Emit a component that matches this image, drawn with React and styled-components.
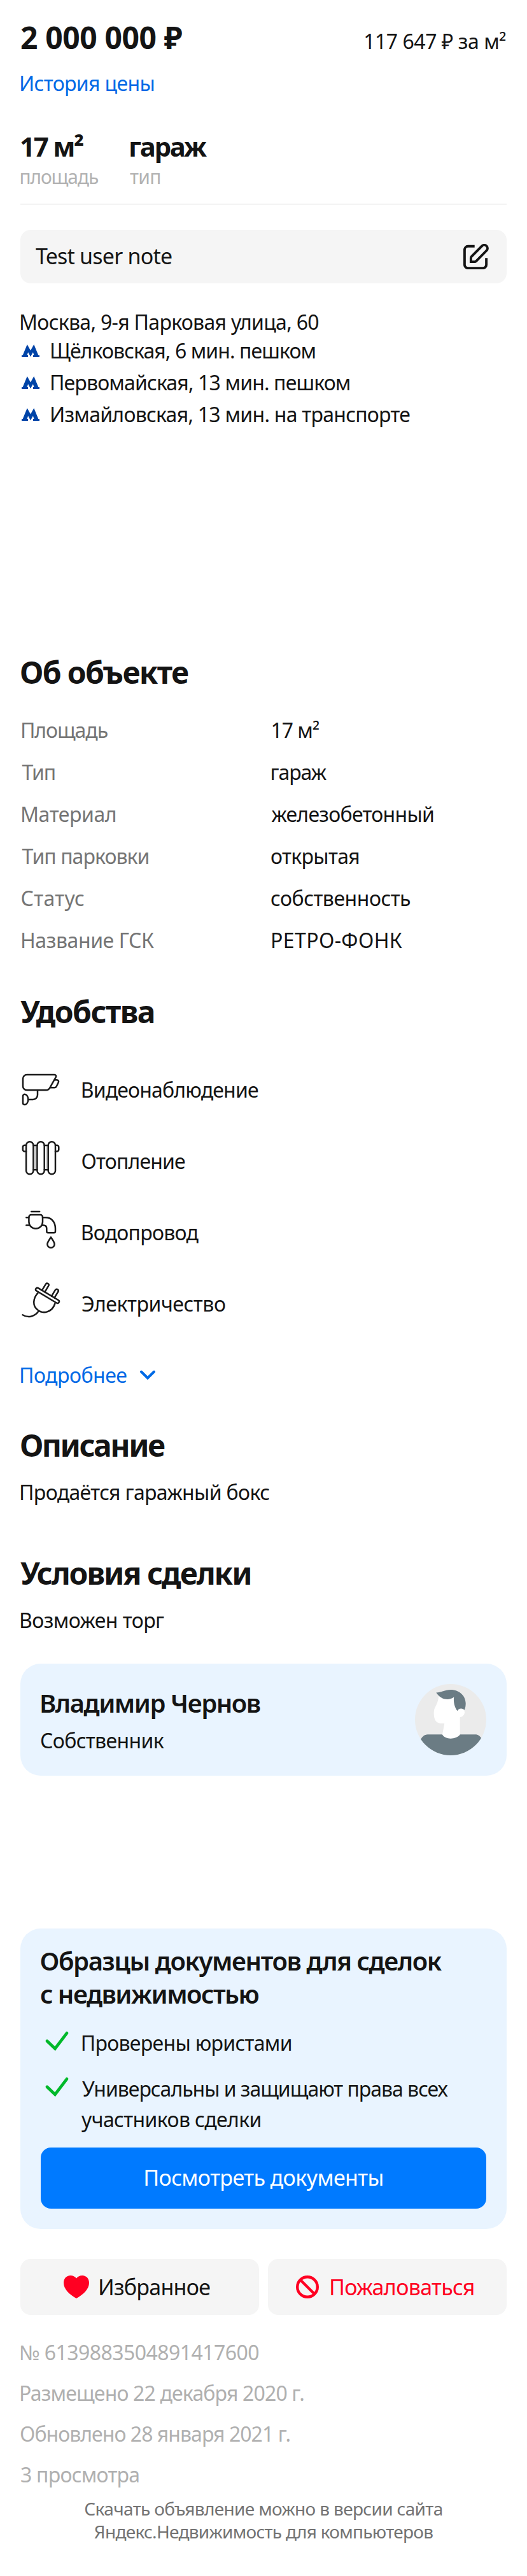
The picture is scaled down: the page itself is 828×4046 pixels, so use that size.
import React from 'react';
import styled, { createGlobalStyle } from 'styled-components';

const GlobalStyle = createGlobalStyle`
  * { box-sizing: border-box; }
  body {
    margin: 0;
    background: #fff;
    color: #141414;
    font-family: "Noto Sans", "Open Sans", sans-serif;
    font-size: 32px;
  }
  h2, h3, p, ul, dl, dd, dt { margin: 0; padding: 0; font-weight: inherit; }
  button { border: 0; font-family: inherit; color: inherit; background: none; padding: 0; }
`;

const Run = styled.span`
  display: inline-block;
  white-space: nowrap;
  letter-spacing: ${(p) => p.$track || 0}px;
  margin-left: ${(p) => p.$nudge || 0}px;
`;

const Page = styled.main`
  width: 828px;
  height: 4046px;
  padding: 30px 32px 0;
  overflow: hidden;
`;

const PriceRow = styled.div`
  display: flex;
  justify-content: space-between;
  align-items: baseline;
  height: 56px;
`;
const Price = styled.div`
  font-size: 48px;
  font-weight: 700;
  line-height: 58px;
`;
const PricePerMeter = styled.div`
  line-height: 48px;
  padding-right: 1px;
`;
const PriceHistory = styled.div`
  margin-top: 21px;
  line-height: 48px;
  color: #006ae6;
`;

const Stats = styled.div`
  display: flex;
  margin-top: 49px;
  height: 117px;
  border-bottom: 1px solid #d6d6d6;
`;
const Stat = styled.div`
  width: 172px;
`;
const StatValue = styled.div`
  font-size: 42px;
  font-weight: 700;
  line-height: 52px;
`;
const StatLabel = styled.div`
  margin-top: 2px;
  font-size: 30px;
  line-height: 40px;
  color: #b2b2b2;
`;

const Note = styled.div`
  display: flex;
  justify-content: space-between;
  align-items: center;
  height: 84px;
  margin-top: 40px;
  padding: 0 28px 0 24px;
  border-radius: 16px;
  background: #f5f5f5;
  font-size: 34px;
`;
const NoteText = styled.div`
  padding-bottom: 2px;
`;

const Address = styled.div`
  margin-top: 41px;
  line-height: 40px;
`;
const MetroList = styled.ul`
  list-style: none;
  height: 501px;
`;
const MetroItem = styled.li`
  display: flex;
  align-items: center;
  gap: 16px;
  height: 50px;
  padding-left: 2px;
  line-height: 50px;
`;

const Section = styled.section`
  margin-top: ${(p) => p.$top || 0}px;
`;
const Title = styled.h2`
  height: 56px;
  font-size: 48px;
  font-weight: 700;
  line-height: 58px;
`;
const Paragraph = styled.p`
  margin-top: 23px;
  line-height: 48px;
`;

const Specs = styled.dl`
  display: grid;
  grid-template-columns: 394px 1fr;
  grid-auto-rows: 66px;
  line-height: 66px;
  margin-top: 31px;
`;
const SpecName = styled.dt`
  color: #757575;
`;
const SpecValue = styled.dd``;

const Features = styled.ul`
  list-style: none;
  margin-top: 39px;
`;
const Feature = styled.li`
  display: flex;
  align-items: center;
  gap: 32px;
  height: 112px;
`;
const FeatureIcon = styled.svg`
  width: 64px;
  height: 64px;
  overflow: visible;
  fill: none;
  stroke: #1a1a1a;
  stroke-width: 2.5;
  stroke-linecap: round;
  stroke-linejoin: round;
`;
const More = styled.button`
  display: flex;
  align-items: center;
  gap: 21px;
  margin-top: 33px;
  font-size: 32px;
  line-height: 48px;
  color: #006ae6;
`;

const Card = styled.section`
  margin-top: ${(p) => p.$top}px;
  border-radius: 32px;
  background: #e9f4ff;
`;
const OwnerCard = styled(Card)`
  display: flex;
  justify-content: space-between;
  height: 176px;
  padding: 32px;
`;
const OwnerInfo = styled.div`
  padding-top: 4px;
`;
const OwnerName = styled.div`
  font-size: 40px;
  font-weight: 600;
  line-height: 52px;
`;
const OwnerRole = styled.div`
  margin-top: 11px;
  line-height: 44px;
`;

const DocsCard = styled(Card)`
  height: 472px;
  padding: 25px 32px 32px;
`;
const DocsTitle = styled.h3`
  font-size: 40px;
  font-weight: 600;
  line-height: 52px;
`;
const CheckList = styled.ul`
  list-style: none;
  display: grid;
  gap: 24px;
  margin-top: 27px;
`;
const CheckItem = styled.li`
  display: grid;
  grid-template-columns: 64px 1fr;
  line-height: 48px;
`;
const PrimaryButton = styled.button`
  display: block;
  width: 100%;
  height: 96px;
  margin-top: 20px;
  padding-bottom: 2px;
  border-radius: 16px;
  background: #007aff;
  color: #fff;
  font-size: 34px;
`;

const Actions = styled.div`
  display: grid;
  grid-template-columns: 1fr 1fr;
  gap: 14px;
  margin-top: 47px;
`;
const ActionButton = styled.button`
  display: flex;
  align-items: center;
  gap: 16px;
  height: 88px;
  padding-left: ${(p) => p.$inset}px;
  border-radius: 16px;
  background: #f5f5f5;
  font-size: 34px;
  color: ${(p) => (p.$danger ? '#ff0022' : '#141414')};
`;

const Meta = styled.div`
  margin-top: 27px;
  line-height: 64px;
  color: #b0b0b0;
`;
const Footer = styled.footer`
  margin-top: 3px;
  font-size: 28px;
  line-height: 36px;
  text-align: center;
  color: #737373;
`;

const EditIcon = () => (
  <svg width="40" height="40" viewBox="0 0 40 40" fill="none" stroke="#141414" strokeWidth="3.9">
    <path d="M17.7 3.8H7.2a5.500 5.500 0 0 0-5.300 5.500v23.400a5.500 5.500 0 0 0 5.500 5.500h23.200a5.500 5.500 0 0 0 5.500-5.500V22.200" />
    <path d="M11.900 28.100v-5.800c0-.9.3-1.700 1-2.400L29.200 3.400a5 5 0 0 1 7.300 7.100L20.200 27.100c-.7.7-1.500 1-2.400 1z" />
  </svg>
);

const MetroIcon = () => (
  <svg width="28" height="20" viewBox="0 0 28 20" fill="#0044a8">
    <path d="M8.700 0 14 9.600 19.300 0l7 17H28v3H18v-2.900h1.500l-1.600-4.900-3.900 7.100-3.900-7.100-1.600 4.900H10V20H0v-3h1.700z" />
  </svg>
);

const CameraIcon = () => (
  <FeatureIcon viewBox="0 0 64 64">
    <path d="M10.200 9h43.200c2.300 0 3.400 1.900 2.300 3.900l-9.300 16.400c-1.600 2.800-3.400 4-6 4H10.200A6.200 6.200 0 0 1 4 27.100V15.200A6.200 6.200 0 0 1 10.200 9z" />
    <path d="M54.200 17.300h3c2.400 0 3.500 1.800 2.500 4l-2.800 5.700c-.7 1.600-1.700 2.300-3.400 2.300h-6.200M27 33.800v7a7.200 7.200 0 0 1-7.200 7.200h-6.900" />
    <path d="M6.800 39.700c3 0 5.500 3.800 5.500 8.200s-2.500 8.200-5.500 8.200A2.800 2.800 0 0 1 4 53.300V42.500a2.800 2.800 0 0 1 2.800-2.800z" />
  </FeatureIcon>
);

const RadiatorIcon = () => (
  <FeatureIcon viewBox="0 0 64 64">
    <path d="M23.300 9.500v36M40.700 9.500v36" stroke="#bdbdbd" strokeWidth="1.500" />
    <rect x="9.100" y="2.300" width="11.300" height="51" rx="5.650" />
    <rect x="26.400" y="2.300" width="11.300" height="51" rx="5.650" />
    <rect x="43.700" y="2.300" width="11.300" height="51" rx="5.650" />
    <path d="M20.400 8h6M37.700 8h6M20.400 46.300h6M37.700 46.300h6M9.100 7.800H6.800a3 3 0 0 0-3 3v3.600a3 3 0 0 0 3 3h2.300M55 7.800h2.300a3 3 0 0 1 3 3v3.600a3 3 0 0 1-3 3H55" />
  </FeatureIcon>
);

const TapIcon = () => (
  <FeatureIcon viewBox="0 0 64 64">
    <path d="M17.200 0h13M9.300 9.300h4M9.300 21.400h5" />
    <path d="M17 5h14.400a3.600 3.600 0 0 1 3.600 3.600v7.300c0 6.200-4.800 10.800-10.800 10.800S13.400 22.100 13.400 15.900V8.600A3.600 3.600 0 0 1 17 5z" />
    <path d="M35 9.300h4.500C49.500 9.300 55 17 55 26.500v4.500c0 1.500-.8 2.300-2.300 2.300h-9.100c-1.500 0-2.300-.8-2.300-2.300v-4.500c0-3.300-1.800-5.100-5-5.100h-2.600" />
    <path d="M48 40.200c-1.900 3.500-5.600 7.300-5.600 11a5.600 5.600 0 0 0 11.200 0c0-3.700-3.700-7.500-5.600-11z" />
  </FeatureIcon>
);

const PlugIcon = () => (
  <FeatureIcon viewBox="0 0 64 64">
    <g transform="translate(42.500 19.800) rotate(31)">
      <rect x="-21" y="-2.600" width="42" height="5.200" rx="2.600" />
      <path d="M-11.500-2.600v-11.200a2.600 2.600 0 0 1 5.200 0v11.200M6.100-2.600v-11.200a2.600 2.600 0 0 1 5.200 0v11.200" />
    </g>
    <path d="M27.300 16.200C20 24 19 35.300 26 41.300c9.500 9 24 4.700 28.400-8.800M28.700 44.200C23.500 52.800 12 55.500 3.600 50.200" />
  </FeatureIcon>
);

const ChevronIcon = () => (
  <svg width="24" height="16" viewBox="0 0 24 16" fill="none" stroke="#006ae6" strokeWidth="4" strokeLinecap="round">
    <path d="m2 2.500 10 10 10-10" />
  </svg>
);

const Avatar = () => (
  <svg width="112" height="112" viewBox="0 0 112 112">
    <defs>
      <clipPath id="avatar-circle">
        <circle cx="56" cy="56" r="56" />
      </clipPath>
    </defs>
    <g clipPath="url(#avatar-circle)">
      <rect width="112" height="112" fill="#ebebeb" />
      <path d="M20 79.300h74.500c5 0 7.500 2.700 9.300 5.300L112 112H0l9.300-25.500c2-3.500 5.500-7.200 10.700-7.200z" fill="#6b7c84" />
      <path d="M37.500 18.500c-1 7-2 10-4.200 15-2.500 4-3.900 7.500-3.600 14 .3 9.500 4.500 14.200 10.800 14.200h5.800L43 79.500c2.500 4 7.500 6.200 13 6.200s11.500-2.200 14.700-6.200V52.300c4.600-.8 7.300-4.300 7.300-8 0-3-1.500-5-5-6L62 16z" fill="#fff" />
      <path d="M33.300 13.500c8 0 13.500-4.500 22.700-4.500 14 0 23.700 10 23.700 21.300 0 3.700-.5 7.200-1.900 10.500-1.300-1.500-3.200-2.400-5.300-2.400-2.700 0-4.700 1.500-6 3.900-3.700-5-6.500-13.300-5.300-21.800-7 5.500-19.700 5.500-27.900-7z" fill="#6b7c84" />
    </g>
  </svg>
);

const CheckIcon = () => (
  <svg width="48" height="48" viewBox="0 0 48 48" fill="none" stroke="#00b92b" strokeWidth="4.800" strokeLinecap="round">
    <path d="m10 20.700 12.500 12L41 8.400" />
  </svg>
);

const HeartIcon = () => (
  <svg width="40" height="36" viewBox="0 0 40 36" fill="#ff0022">
    <path d="M20 4.600C22.300 1.500 25.600 0 29.200 0 35.700 0 40 5 40 11.500 40 21 31.500 29.500 20 36 8.500 29.500 0 21 0 11.500 0 5 4.300 0 10.800 0c3.600 0 6.900 1.500 9.200 4.600z" />
  </svg>
);

const BanIcon = () => (
  <svg width="36" height="36" viewBox="0 0 36 36" fill="none" stroke="#ff0022" strokeWidth="4.400">
    <circle cx="18" cy="18" r="15.800" />
    <path d="m7 7 22 22" />
  </svg>
);

const metro = [
  ['Щёлковская, 6 мин. пешком', -0.92],
  ['Первомайская, 13 мин. пешком', -0.86],
  ['Измайловская, 13 мин. на транспорте', -0.74],
];

const specs = [
  [['Площадь', -1.09, 0], ['17 м²', -1.03, -0.5]],
  [['Тип', -1.25, 2.5], ['гараж', -1.05, -1.5]],
  [['Материал', -0.43, 0], ['железобетонный', -0.72, 0.5]],
  [['Тип парковки', -0.94, 2.5], ['открытая', -0.67, -1]],
  [['Статус', 0.3, 0.5], ['собственность', -0.48, -1]],
  [['Название ГСК', -0.42, 0], ['РЕТРО-ФОНК', 0.4, -1]],
];

const features = [
  [CameraIcon, 'Видеонаблюдение', -0.83, -1.3],
  [RadiatorIcon, 'Отопление', -0.83, -0.5],
  [TapIcon, 'Водопровод', -0.76, -1.3],
  [PlugIcon, 'Электричество', -0.44, 0],
];

export default function App() {
  return (
    <>
      <GlobalStyle />
      <Page>
        <PriceRow>
          <Price><Run $track={-0.39}>2 000 000 ₽</Run></Price>
          <PricePerMeter><Run $track={-0.47}>117 647 ₽ за м²</Run></PricePerMeter>
        </PriceRow>
        <PriceHistory><Run $track={-0.63} $nudge={-2}>История цены</Run></PriceHistory>
        <Stats>
          <Stat>
            <StatValue><Run $track={-2.2} $nudge={-1}>17 м²</Run></StatValue>
            <StatLabel><Run $track={-1.17} $nudge={-1.5}>площадь</Run></StatLabel>
          </Stat>
          <Stat>
            <StatValue><Run $track={-2.3} $nudge={-2}>гараж</Run></StatValue>
            <StatLabel><Run $track={-0.7}>тип</Run></StatLabel>
          </Stat>
        </Stats>

        <Note>
          <NoteText><Run $track={-0.8}>Test user note</Run></NoteText>
          <EditIcon />
        </Note>

        <Address><Run $track={-0.7} $nudge={-2}>Москва, 9-я Парковая улица, 60</Run></Address>
        <MetroList>
          {metro.map(([name, track]) => (
            <MetroItem key={name}>
              <MetroIcon />
              <Run $track={track}>{name}</Run>
            </MetroItem>
          ))}
        </MetroList>

        <Section>
          <Title><Run $track={-1.63} $nudge={-1}>Об объекте</Run></Title>
          <Specs>
            {specs.map(([name, value]) => (
              <React.Fragment key={name[0]}>
                <SpecName><Run $track={name[1]} $nudge={name[2]}>{name[0]}</Run></SpecName>
                <SpecValue><Run $track={value[1]} $nudge={value[2]}>{value[0]}</Run></SpecValue>
              </React.Fragment>
            ))}
          </Specs>
        </Section>

        <Section $top={50}>
          <Title><Run $track={-1.58}>Удобства</Run></Title>
          <Features>
            {features.map(([Icon, label, track, nudge]) => (
              <Feature key={label}>
                <Icon />
                <Run $track={track} $nudge={nudge}>{label}</Run>
              </Feature>
            ))}
          </Features>
          <More>
            <Run $track={-0.51} $nudge={-2}>Подробнее</Run>
            <ChevronIcon />
          </More>
        </Section>

        <Section $top={57}>
          <Title><Run $track={-2.49} $nudge={-1}>Описание</Run></Title>
          <Paragraph><Run $track={-0.64} $nudge={-2}>Продаётся гаражный бокс</Run></Paragraph>
        </Section>

        <Section $top={74}>
          <Title><Run $track={-1.99}>Условия сделки</Run></Title>
          <Paragraph><Run $track={-0.55} $nudge={-2}>Возможен торг</Run></Paragraph>
        </Section>

        <OwnerCard $top={44}>
          <OwnerInfo>
            <OwnerName><Run $track={-1.45} $nudge={-2}>Владимир Чернов</Run></OwnerName>
            <OwnerRole><Run $track={-0.63} $nudge={-1}>Собственник</Run></OwnerRole>
          </OwnerInfo>
          <Avatar />
        </OwnerCard>

        <DocsCard $top={240}>
          <DocsTitle>
            <Run $track={-1.39} $nudge={-1.5}>Образцы документов для сделок</Run>
            <br />
            <Run $track={-1.51} $nudge={-1}>с недвижимостью</Run>
          </DocsTitle>
          <CheckList>
            <CheckItem>
              <CheckIcon />
              <div><Run $track={-0.7} $nudge={-1.3}>Проверены юристами</Run></div>
            </CheckItem>
            <CheckItem>
              <CheckIcon />
              <div>
                <Run $track={-1.03} $nudge={1}>Универсальны и защищают права всех</Run>
                <br />
                <Run $track={-0.62}>участников сделки</Run>
              </div>
            </CheckItem>
          </CheckList>
          <PrimaryButton><Run $track={-0.6}>Посмотреть документы</Run></PrimaryButton>
        </DocsCard>

        <Actions>
          <ActionButton $inset={68}>
            <HeartIcon />
            <Run $track={-0.74} $nudge={-2}>Избранное</Run>
          </ActionButton>
          <ActionButton $inset={44} $danger>
            <BanIcon />
            <Run $track={-0.66}>Пожаловаться</Run>
          </ActionButton>
        </Actions>

        <Meta>
          <div><Run $track={-0.56} $nudge={-2}>№ 6139883504891417600</Run></div>
          <div><Run $track={-0.84} $nudge={-2}>Размещено 22 декабря 2020 г.</Run></div>
          <div><Run $track={-0.97} $nudge={-1}>Обновлено 28 января 2021 г.</Run></div>
          <div><Run $track={-0.76}>3 просмотра</Run></div>
        </Meta>

        <Footer>
          <div><Run $track={-0.65}>Скачать объявление можно в версии сайта</Run></div>
          <div><Run $track={-0.71}>Яндекс.Недвижимость для компьютеров</Run></div>
        </Footer>
      </Page>
    </>
  );
}
